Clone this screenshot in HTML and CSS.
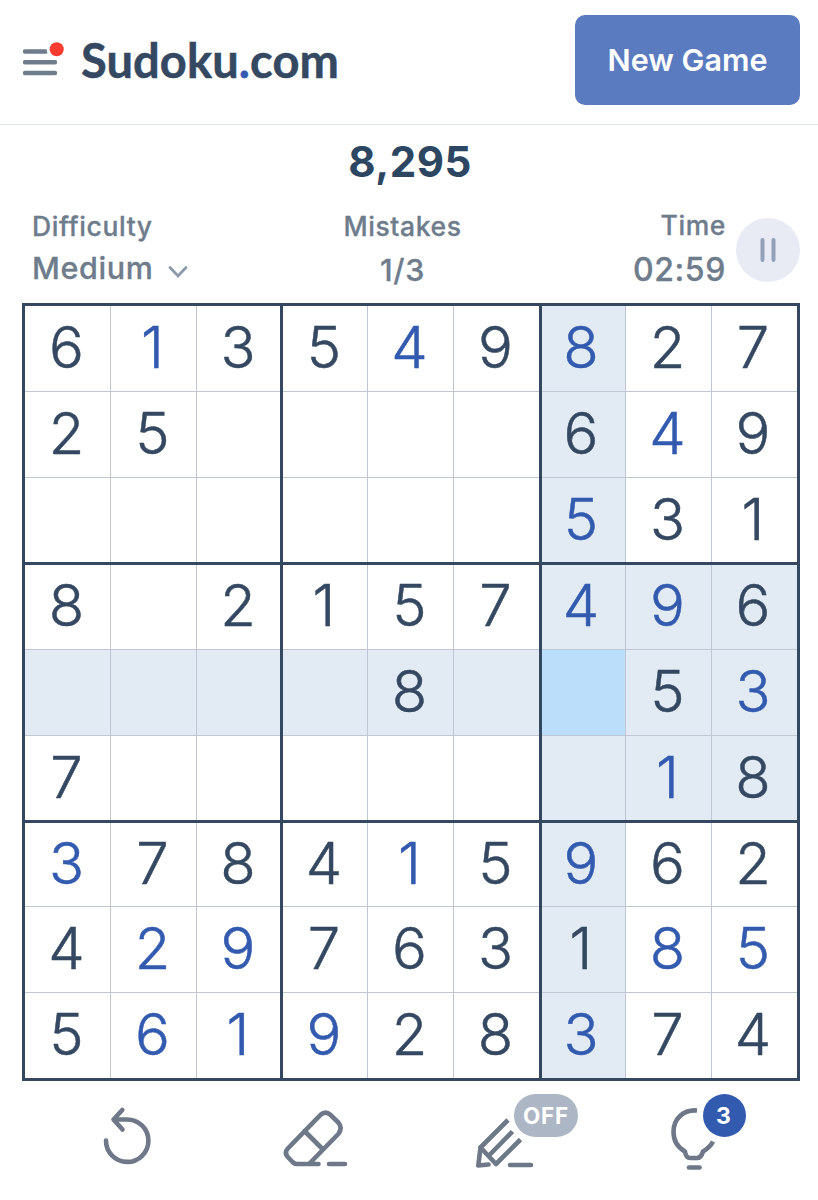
FILE: index.html
```html
<!DOCTYPE html>
<html lang="en">
<head>
    <meta charset="UTF-8">
    <title>Sudoku.com</title>
    <link rel="stylesheet" href="styles.css">
</head>
<body>
    <header class="header">
        <svg class="menu" width="44" height="40" viewBox="0 0 44 40">
            <path d="M3 11.5H24M3 22.3H33M3 33H33" stroke="#6e7c8c" stroke-width="4.4" stroke-linecap="round"/>
            <circle cx="34.700" cy="9.3" r="10" fill="#fff"/>
            <circle cx="34.700" cy="9.3" r="7" fill="#ff3b30"/>
        </svg>
        <div class="logo">Sudoku<span class="dot">.</span>com</div>
        <button class="new-game">New Game</button>
    </header>

    <div class="score">8,295</div>

    <div class="info">
        <div class="difficulty">
            <div class="label">Difficulty</div>
            <div class="level">Medium
                <svg width="20" height="14" viewBox="0 0 20 14">
                    <path d="M2 2.5L10 11L18 2.5" fill="none" stroke="#8c9cad" stroke-width="2.8" stroke-linecap="round"/>
                </svg>
            </div>
        </div>
        <div class="mistakes">
            <div class="label">Mistakes</div>
            <div class="count">1/3</div>
        </div>
        <div class="time">
            <div class="label">Time</div>
            <div class="clock">02:59</div>
        </div>
        <div class="pause">
            <svg width="20" height="28" viewBox="0 0 20 28">
                <path d="M4.5 4V24M15.5 4V24" stroke="#92a1b9" stroke-width="4" stroke-linecap="round"/>
            </svg>
        </div>
    </div>

    <div class="board" id="board"></div>

    <div class="tools">
        <svg width="64" height="70" viewBox="96 1100 64 70">
            <path d="M106 1140.500A21.200 21.200 0 1 0 127.200 1119.500H114M122.300 1110L113.500 1119.500L122.500 1129.500"/>
        </svg>
        <svg width="72" height="70" viewBox="278 1100 72 70">
            <path d="M318.500 1164H297Q294.500 1164 292.500 1162L287.800 1157Q284 1152.500 287.800 1148.500L320.500 1114.800Q325.500 1110.500 330.500 1114.800L338.300 1122.500Q343 1128 338.300 1134L310 1163M304.500 1131L323 1149.500M329 1164H345"/>
        </svg>
        <div class="tool notes">
            <svg width="64" height="70" viewBox="472 1100 64 70">
                <path class="butt" d="M508 1120L480.500 1147.500L496 1164L520.500 1139.500M512.500 1131.500L489.500 1155"/>
                <path d="M480.500 1147.500L478.300 1165.500L488.500 1164.500M510 1165H531"/>
            </svg>
            <span class="badge off">OFF</span>
        </div>
        <div class="tool hint">
            <svg width="64" height="70" viewBox="662 1100 64 70">
                <path class="butt" d="M697 1110.500C683 1109.500 673.500 1119 673.500 1132C673.500 1141 678 1147.500 685 1151.500C685.500 1155 687 1158 690 1158H697C700.500 1158 702 1155 703 1151.500C708 1148.500 711 1145.500 713 1141.500"/>
                <path d="M689 1167.500H699.500"/>
            </svg>
            <span class="badge hints">3</span>
        </div>
    </div>

    <script src="script.js"></script>
</body>
</html>
```
FILE: styles.css
```css
* {
    box-sizing: border-box;
}
body {
    margin: 0;
    width: 818px;
    height: 1200px;
    overflow: hidden;
    background: #fff;
    font-family: "Inter", sans-serif;
    color: #6e7c8c;
}
.header {
    display: flex;
    align-items: center;
    height: 125px;
    padding: 0 18px 4px 22px;
    border-bottom: 1px solid #dfe5ec;
}
.menu {
    flex: none;
}
.logo {
    margin-left: 15px;
    font-family: "Lato", sans-serif;
    font-size: 47px;
    font-weight: 700;
    line-height: 60px;
    letter-spacing: 0.1px;
    color: #344861;
    -webkit-text-stroke: 0.5px;
}
.dot {
    color: #325aaf;
}
.new-game {
    width: 225px;
    height: 90px;
    margin-left: auto;
    padding: 0 0 2px;
    border: 0;
    border-radius: 10px;
    background: #5a7bc0;
    color: #fff;
    font: 600 30.5px "Inter", sans-serif;
    letter-spacing: 0;
}
.score {
    height: 74px;
    padding-left: 2px;
    line-height: 74px;
    text-align: center;
    font-size: 42px;
    font-weight: 700;
    letter-spacing: 0.5px;
    color: #2d4763;
}
.info {
    display: grid;
    grid-template-columns: 248px 225px 201px 64px;
    column-gap: 10px;
    height: 104px;
    padding: 10px 18px 0 32px;
}
.label {
    font-size: 26.5px;
    font-weight: 500;
    line-height: 34px;
    letter-spacing: 0.6px;
    -webkit-text-stroke: 0.3px;
}
.level,
.count,
.clock {
    font-size: 30.5px;
    font-weight: 500;
    line-height: 40px;
    letter-spacing: 0.6px;
    padding-top: 7px;
    -webkit-text-stroke: 0.3px;
}
.level {
    padding-top: 5px;
}
.level svg {
    margin-left: 6px;
}
.mistakes {
    text-align: center;
}
.time {
    margin-top: -1px;
    text-align: right;
}
.clock {
    padding-top: 8px;
    font-size: 32px;
}
.pause {
    display: flex;
    align-items: center;
    justify-content: center;
    width: 64px;
    height: 64px;
    margin-top: 9px;
    border-radius: 50%;
    background: #e8ebf4;
}
.board {
    display: grid;
    grid-template-columns: 86px 86px 86px 85px 86px 88px 84px 86px 85px;
    grid-template-rows: 86px 86px 87px 85px 86px 87px 84px 86px 85px;
    width: 778px;
    height: 778px;
    margin-left: 22px;
    border: 3px solid #344861;
}
.cell {
    --right: inset -1px 0 #bfc6d4;
    --bottom: inset 0 -1px #bfc6d4;
    padding-right: 3px;
    box-shadow: var(--right), var(--bottom);
    text-align: center;
    font-size: 58px;
    font-weight: 300;
    line-height: 82px;
    color: #344861;
    -webkit-text-stroke: 0.5px;
}
/* thick lines between the 3x3 boxes */
.cell:nth-child(9n+3),
.cell:nth-child(9n+6) {
    --right: inset -3px 0 #344861;
    padding-right: 4px;
}
.cell:nth-child(9n+6) {
    padding-right: 5px;
}
.cell:nth-child(9n+7) {
    padding-right: 6px;
}
.cell:nth-child(n+19):nth-child(-n+27),
.cell:nth-child(n+46):nth-child(-n+54) {
    --bottom: inset 0 -3px #344861;
    box-shadow: var(--bottom), var(--right);
}
.cell:nth-child(9n) {
    --right: inset 0 0 transparent;
}
.cell:nth-child(n+73) {
    --bottom: inset 0 0 transparent;
}
.cell:nth-child(n+28):nth-child(-n+36),
.cell:nth-child(n+55):nth-child(-n+63) {
    line-height: 80px;
}
.filled {
    color: #325aaf;
}
.lit {
    background: #e2eaf3;
}
.selected {
    background: #bbdefb;
}
.tools {
    display: flex;
    height: 119px;
    padding: 19px 0 0 96px;
}
.tools svg {
    flex: none;
    fill: none;
    stroke: #6e7888;
    stroke-width: 4.6;
    stroke-linecap: round;
    stroke-linejoin: round;
}
.tools > svg + svg {
    margin-left: 118px;
}
.tools .butt {
    stroke-linecap: butt;
}
.tool {
    position: relative;
    width: 64px;
}
.notes {
    margin-left: 122px;
}
.hint {
    margin-left: 126px;
}
.badge {
    position: absolute;
    top: -6px;
    height: 43px;
    border-radius: 22px;
    color: #fff;
    font-weight: 700;
    line-height: 44px;
    text-align: center;
}
.off {
    left: 42px;
    width: 64px;
    background: #adb6c4;
    font-size: 22.5px;
    letter-spacing: 0.8px;
}
.hints {
    left: 41px;
    width: 43px;
    padding-right: 2px;
    background: #325aaf;
    font-size: 23px;
}
```
FILE: script.js
```js
// given numbers and player's numbers ("*" after a digit marks the player's own)
const rows = [
    '6 1* 3 5 4* 9 8* 2 7',
    '2 5 . . . . 6 4* 9',
    '. . . . . . 5* 3 1',
    '8 . 2 1 5 7 4* 9* 6',
    '. . . . 8 . . 5 3*',
    '7 . . . . . . 1* 8',
    '3* 7 8 4 1* 5 9* 6 2',
    '4 2* 9* 7 6 3 1 8* 5*',
    '5 6* 1* 9* 2 8 3* 7 4'
];
const selected = { row: 4, col: 6 };
const board = document.getElementById('board');

rows.forEach(function(line, r) {
    line.split(' ').forEach(function(value, c) {
        const cell = document.createElement('div');
        const sameBox = Math.floor(r / 3) === Math.floor(selected.row / 3) &&
            Math.floor(c / 3) === Math.floor(selected.col / 3);
        cell.className = 'cell';
        if (r === selected.row && c === selected.col) {
            cell.classList.add('selected');
        } else if (r === selected.row || c === selected.col || sameBox) {
            cell.classList.add('lit');
        }
        if (value.endsWith('*')) {
            cell.classList.add('filled');
        }
        if (value !== '.') {
            cell.textContent = value[0];
        }
        board.appendChild(cell);
    });
});
```
